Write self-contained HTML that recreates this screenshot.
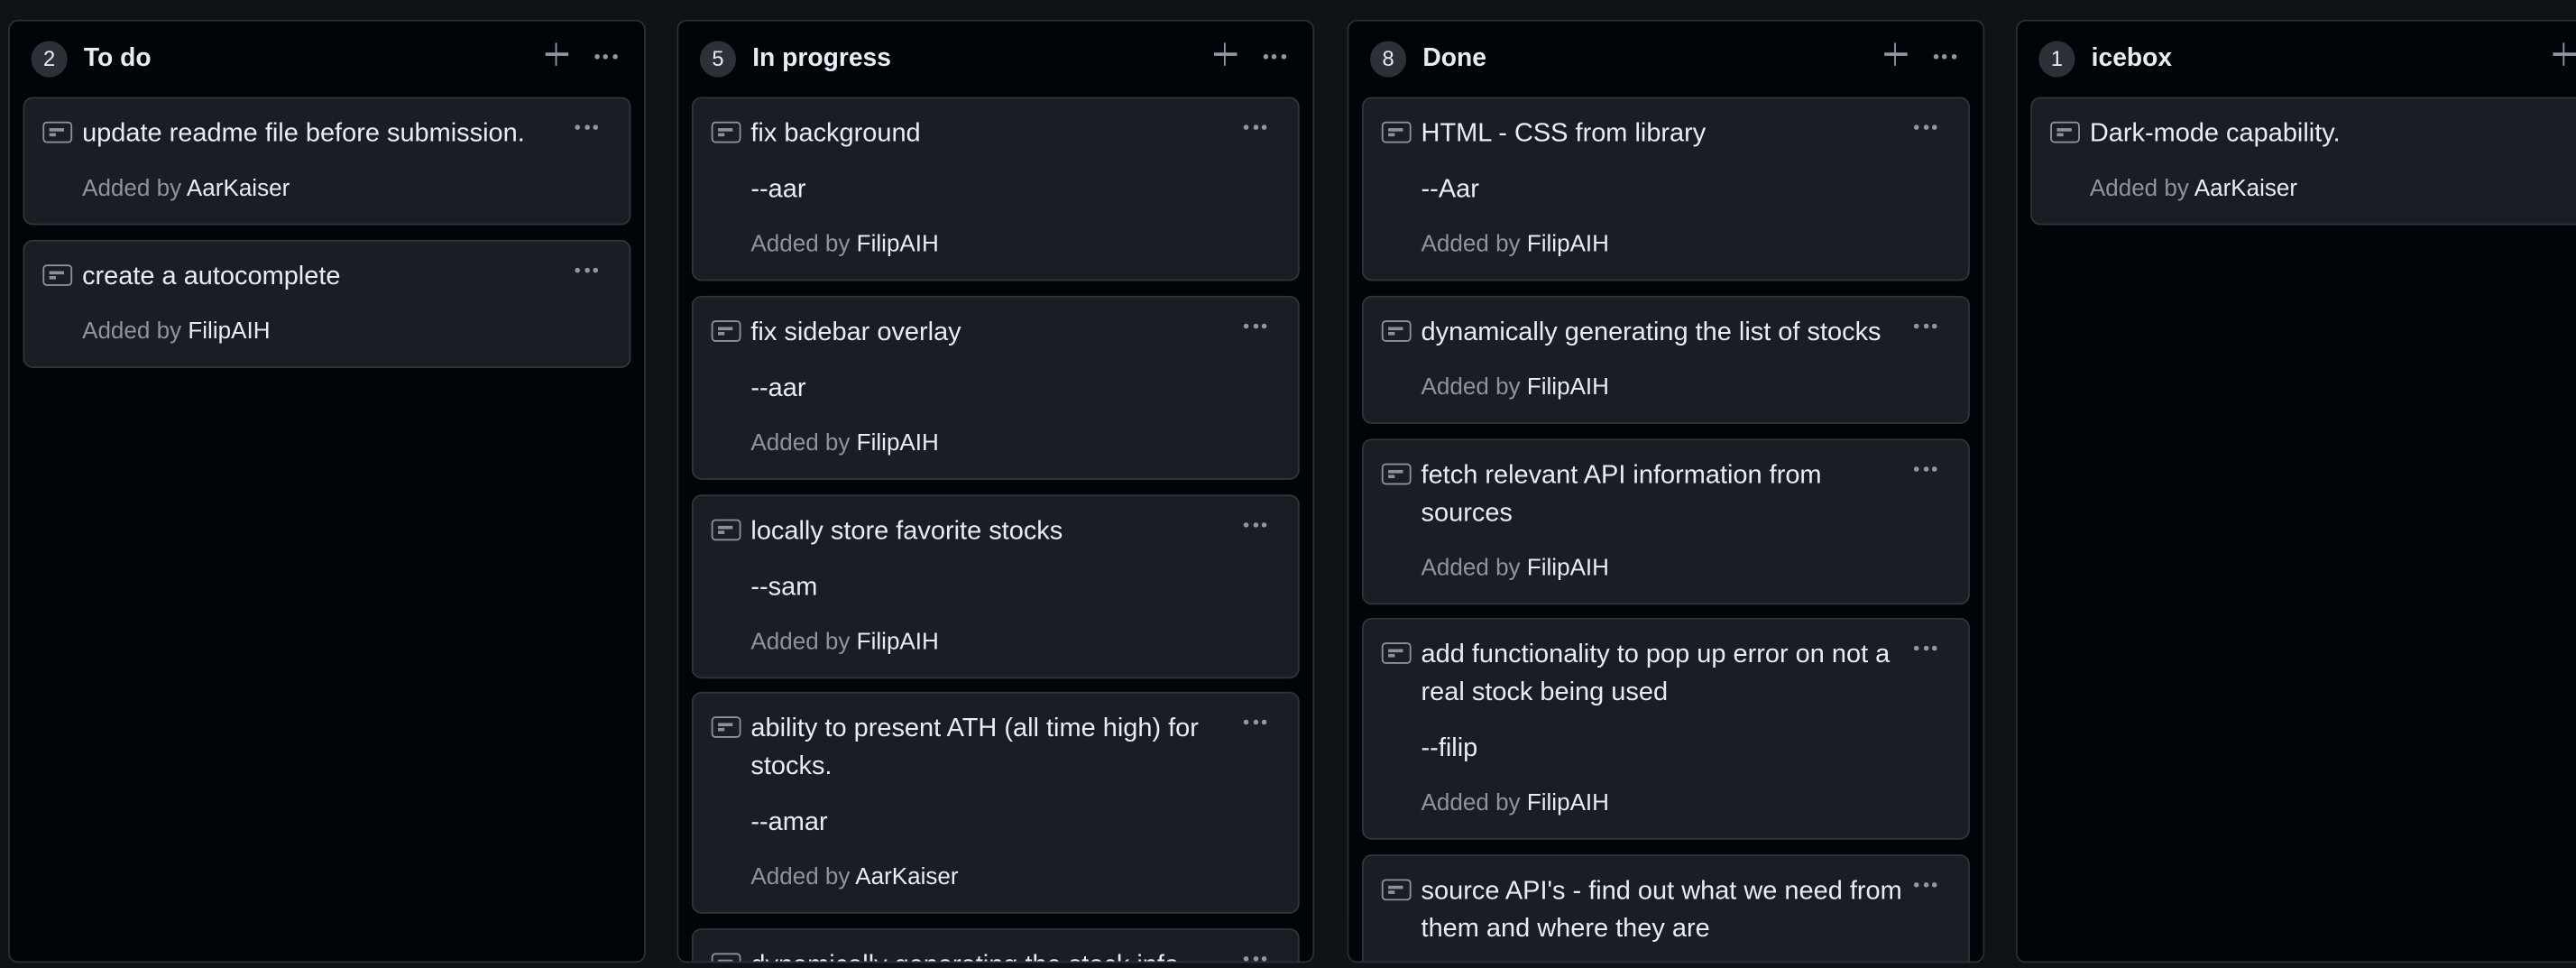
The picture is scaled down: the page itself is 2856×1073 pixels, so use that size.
<!DOCTYPE html>
<html><head><meta charset="utf-8"><style>
html,body{margin:0;padding:0;background:#0f1216;width:2856px;height:1072px;overflow:hidden}
#s{position:absolute;left:0;top:0;width:1568px;height:589px;transform:scale(1.82143);transform-origin:0 0;font-family:"Liberation Sans",sans-serif;color:#e6edf3;overflow:hidden}
.col{position:absolute;top:12px;width:386px;height:572px;background:#010409;border:1px solid #2a2f36;border-radius:6px;overflow:hidden}
.hd{position:absolute;left:0;top:0;height:46px;width:100%}
.badge{position:absolute;left:13px;top:12px;width:22px;height:22px;border-radius:11px;background:#2d3137;color:#e6edf3;font-size:13px;line-height:22px;text-align:center}
.ttl{position:absolute;left:45px;top:13px;font-size:15.5px;font-weight:bold;line-height:20px}
.plus{position:absolute;left:326px;top:13px;width:14px;height:14px}
.plus:before,.plus:after{content:"";position:absolute;background:#9198a1}
.plus:before{left:6px;top:0;width:1.4px;height:14px}
.plus:after{left:0;top:6.3px;width:14px;height:1.4px}
.hdots{position:absolute;left:356px;top:20px}
.dots{display:flex;gap:2.6px}
.dots i{display:block;width:2.8px;height:2.8px;border-radius:50%;background:#9198a1}
.card{position:absolute;left:8px;width:370px;background:#1a1d23;border:1px solid #30353c;border-radius:6px;box-sizing:border-box;padding:10px 0 9px 35px}
.card .ic{position:absolute;left:11px;top:14px;width:17.5px;height:12.6px;border:1.5px solid #8b929b;border-radius:2.5px;box-sizing:border-box}
.card .ic:before{content:"";position:absolute;left:2.6px;top:3px;width:9px;height:1.6px;background:#8b929b}
.card .ic:after{content:"";position:absolute;left:2.6px;top:6.2px;width:4.5px;height:1.6px;background:#8b929b}
.card .cd{position:absolute;right:19px;top:16px}
.l{font-size:15.9px;line-height:23px;white-space:nowrap;color:#e6edf3}
.g{margin-top:11px}
.a{font-size:14.3px;line-height:23px;color:#8d949d;white-space:nowrap}
.a b{font-weight:normal;color:#e6edf3}
</style></head><body><div id="s">

<div class="col" style="left:5px">
 <div class="hd"><div class="badge">2</div><div class="ttl">To do</div><div class="plus"></div><div class="hdots dots"><i></i><i></i><i></i></div></div>
 <div class="card" style="top:46px"><div class="ic"></div><div class="cd dots"><i></i><i></i><i></i></div><div class="l">update readme file before submission.</div><div class="a g">Added by <b>AarKaiser</b></div></div>
 <div class="card" style="top:133px"><div class="ic"></div><div class="cd dots"><i></i><i></i><i></i></div><div class="l">create a autocomplete</div><div class="a g">Added by <b>FilipAIH</b></div></div>
</div>

<div class="col" style="left:412px">
 <div class="hd"><div class="badge">5</div><div class="ttl">In progress</div><div class="plus"></div><div class="hdots dots"><i></i><i></i><i></i></div></div>
 <div class="card" style="top:46px"><div class="ic"></div><div class="cd dots"><i></i><i></i><i></i></div><div class="l">fix background</div><div class="l g">--aar</div><div class="a g">Added by <b>FilipAIH</b></div></div>
 <div class="card" style="top:167px"><div class="ic"></div><div class="cd dots"><i></i><i></i><i></i></div><div class="l">fix sidebar overlay</div><div class="l g">--aar</div><div class="a g">Added by <b>FilipAIH</b></div></div>
 <div class="card" style="top:288px"><div class="ic"></div><div class="cd dots"><i></i><i></i><i></i></div><div class="l">locally store favorite stocks</div><div class="l g">--sam</div><div class="a g">Added by <b>FilipAIH</b></div></div>
 <div class="card" style="top:408px"><div class="ic"></div><div class="cd dots"><i></i><i></i><i></i></div><div class="l">ability to present ATH (all time high) for<br>stocks.</div><div class="l g">--amar</div><div class="a g">Added by <b>AarKaiser</b></div></div>
 <div class="card" style="top:552px;height:60px"><div class="ic"></div><div class="cd dots"><i></i><i></i><i></i></div><div class="l">dynamically generating the stock info</div></div>
</div>

<div class="col" style="left:820px">
 <div class="hd"><div class="badge">8</div><div class="ttl">Done</div><div class="plus"></div><div class="hdots dots"><i></i><i></i><i></i></div></div>
 <div class="card" style="top:46px"><div class="ic"></div><div class="cd dots"><i></i><i></i><i></i></div><div class="l">HTML - CSS from library</div><div class="l g">--Aar</div><div class="a g">Added by <b>FilipAIH</b></div></div>
 <div class="card" style="top:167px"><div class="ic"></div><div class="cd dots"><i></i><i></i><i></i></div><div class="l">dynamically generating the list of stocks</div><div class="a g">Added by <b>FilipAIH</b></div></div>
 <div class="card" style="top:254px"><div class="ic"></div><div class="cd dots"><i></i><i></i><i></i></div><div class="l">fetch relevant API information from<br>sources</div><div class="a g">Added by <b>FilipAIH</b></div></div>
 <div class="card" style="top:363px"><div class="ic"></div><div class="cd dots"><i></i><i></i><i></i></div><div class="l">add functionality to pop up error on not a<br>real stock being used</div><div class="l g">--filip</div><div class="a g">Added by <b>FilipAIH</b></div></div>
 <div class="card" style="top:507px;height:100px"><div class="ic"></div><div class="cd dots"><i></i><i></i><i></i></div><div class="l">source API's - find out what we need from<br>them and where they are</div></div>
</div>

<div class="col" style="left:1227px;width:400px">
 <div class="hd"><div class="badge">1</div><div class="ttl">icebox</div><div class="plus"></div></div>
 <div class="card" style="top:46px;width:382px"><div class="ic"></div><div class="l">Dark-mode capability.</div><div class="a g">Added by <b>AarKaiser</b></div></div>
</div>

</div></body></html>
